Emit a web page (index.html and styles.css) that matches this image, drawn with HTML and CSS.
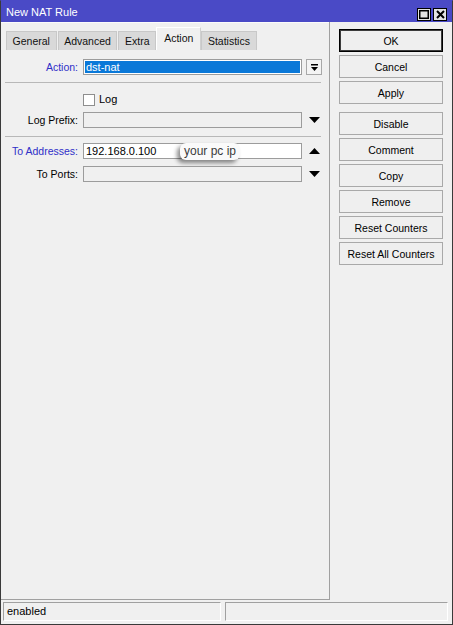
FILE: index.html
```html
<!DOCTYPE html>
<html lang="en">
<head>
  <meta charset="UTF-8" />
  <title>New NAT Rule</title>
  <link rel="stylesheet" href="styles.css">
</head>
<body>
  <div class="window">
    <!-- title bar -->
    <div class="titlebar">
      <span class="title">New NAT Rule</span>
      <div class="title-buttons">
        <span class="tb-btn">
          <svg width="10" height="9" viewBox="0 0 10 9"><rect x="0.75" y="0.75" width="8.5" height="7.5" fill="none" stroke="#000" stroke-width="1.5"/></svg>
        </span>
        <span class="tb-btn">
          <svg width="9" height="9" viewBox="0 0 9 9"><path d="M1 1L8 8M8 1L1 8" stroke="#000" stroke-width="2"/></svg>
        </span>
      </div>
    </div>

    <div class="content">
      <div class="editor">
        <div class="tabs">
          <div class="tab">General</div>
          <div class="tab">Advanced</div>
          <div class="tab">Extra</div>
          <div class="tab active">Action</div>
          <div class="tab">Statistics</div>
        </div>

        <div class="panel">
          <div class="row">
            <span class="field-label blue">Action:</span>
            <div class="input selected"><span>dst-nat</span></div>
            <span class="drop-btn">
              <svg width="9" height="9" viewBox="0 0 9 9"><rect x="1" y="1" width="7" height="1.5" fill="#000"/><path d="M1 4H8L4.5 8Z" fill="#000"/></svg>
            </span>
          </div>

          <div class="sep sep-first"></div>

          <div class="row row-check">
            <span></span>
            <label class="check"><span class="box"></span>Log</label>
          </div>

          <div class="row row-prefix">
            <span class="field-label">Log Prefix:</span>
            <div class="input disabled"></div>
            <span class="arrow">
              <svg width="11" height="6" viewBox="0 0 11 6"><path d="M0 0H11L5.5 6Z" fill="#000"/></svg>
            </span>
          </div>

          <div class="sep sep-second"></div>

          <div class="row row-addr">
            <span class="field-label blue">To Addresses:</span>
            <div class="input">
              <span>192.168.0.100</span>
              <span class="hint">your pc ip</span>
            </div>
            <span class="arrow">
              <svg width="11" height="6" viewBox="0 0 11 6"><path d="M0 6H11L5.5 0Z" fill="#000"/></svg>
            </span>
          </div>

          <div class="row row-ports">
            <span class="field-label">To Ports:</span>
            <div class="input disabled"></div>
            <span class="arrow">
              <svg width="11" height="6" viewBox="0 0 11 6"><path d="M0 0H11L5.5 6Z" fill="#000"/></svg>
            </span>
          </div>
        </div>
      </div>

      <!-- side buttons -->
      <div class="buttons">
        <button class="btn default">OK</button>
        <button class="btn">Cancel</button>
        <button class="btn">Apply</button>
        <button class="btn group-start">Disable</button>
        <button class="btn">Comment</button>
        <button class="btn">Copy</button>
        <button class="btn">Remove</button>
        <button class="btn">Reset Counters</button>
        <button class="btn">Reset All Counters</button>
      </div>
    </div>

    <div class="statusbar">
      <div class="status-field first">enabled</div>
      <div class="status-field"></div>
    </div>
  </div>
</body>
</html>
```

FILE: styles.css
```css
/* base */
body {
  margin: 0;
  font-family: "Liberation Sans", Arial, sans-serif;
  font-size: 10.5px;
  color: #000;
  background: #f0f0f0;
}
* { box-sizing: border-box; }

.window {
  width: 453px;
  height: 625px;
  border: 1px solid #3a3a3a;
  border-top-color: #4a4ac6;
  background: #f0f0f0;
  display: flex;
  flex-direction: column;
}

/* title bar */
.titlebar {
  height: 21px;
  flex: none;
  background: #4a4ac6;
  color: #fff;
  display: flex;
  align-items: center;
  justify-content: space-between;
  padding: 0 5px 0 5px;
  font-size: 11px;
}
.title { margin-top: 1px; }
.title-buttons { display: flex; gap: 2px; margin-top: 5px; }
.tb-btn {
  width: 14px; height: 13px;
  background: #e4e4e4;
  border: 1px solid #000;
  display: flex; align-items: center; justify-content: center;
}

/* main area */
.content {
  flex: 1;
  display: flex;
  min-height: 0;
}
.editor {
  width: 329px;
  display: flex;
  flex-direction: column;
  border-right: 1px solid #a0a0a0;
  border-bottom: 1px solid #a0a0a0;
}

/* tabs */
.tabs {
  height: 28px;
  flex: none;
  display: flex;
  align-items: flex-end;
  padding-left: 5px;
  gap: 1px;
  border-top: 1px solid #fbfbfb;
}
.tab {
  height: 19px;
  line-height: 19px;
  padding: 0 5.6px;
  background: #d9d9d9;
  border: 1px solid #c8c8c8;
  border-bottom: none;
  color: #111;
}
.tab.active {
  height: 23px;
  line-height: 21px;
  padding: 0 7px 2px;
  margin: 0 -1px;
  background: #f0f0f0;
  border-color: #fff #d0d0d0 transparent #fff;
  position: relative;
}

.panel {
  flex: 1;
  padding-top: 9px;
}

/* form rows */
.row {
  display: grid;
  grid-template-columns: 80px 219px 19px;
  column-gap: 2px;
  height: 16px;
  align-items: center;
}
.field-label {
  text-align: right;
  padding-right: 3px;
}
.field-label.blue { color: #2f2fc8; }

.input {
  height: 16px;
  border: 1px solid #9c9c9c;
  background: #fff;
  padding: 0 2px;
  line-height: 14px;
  position: relative;
  font-size: 11px;
}
.input.disabled { background: #f0f0f0; }
.input.selected {
  padding: 1px;
}
.input.selected span {
  display: block;
  height: 12px;
  line-height: 12px;
  background: #0a78d8;
  color: #fff;
  padding-left: 1px;
}

.drop-btn {
  margin-left: 2px;
  width: 16px; height: 16px;
  border: 1px solid #a8a8a8;
  background: #f4f4f4;
  display: flex; align-items: center; justify-content: center;
}
.arrow {
  display: flex;
  justify-content: center;
  padding-left: 2px;
}

.sep {
  height: 1px;
  background: #b8b8b8;
  margin: 0 8px 0 4px;
}
.sep-first { margin-top: 7px; }
.row-check { margin-top: 8px; }
.row-prefix { margin-top: 5px; }
.sep-second { margin-top: 8px; }
.row-addr { margin-top: 6px; }
.row-ports { margin-top: 7px; }

.check {
  display: flex;
  align-items: center;
  gap: 4px;
  font-size: 11px;
}
.check .box {
  width: 12px; height: 12px;
  border: 1px solid #8e8e8e;
  background: #fff;
  margin-top: 1px;
}

/* note bubble on top of the address field */
.hint {
  position: absolute;
  left: 96px;
  top: -1px;
  height: 17px;
  line-height: 17px;
  padding: 0 4px;
  background: #fafafa;
  color: #3a3a3a;
  font-size: 12px;
  border-radius: 6px;
  box-shadow: -3px 3px 4px rgba(0,0,0,0.45);
  text-shadow: 0 0 1px #fff;
}

/* side buttons */
.buttons {
  margin-left: 9px;
  padding-top: 7px;
  width: 104px;
  display: flex;
  flex-direction: column;
  gap: 3px;
}
.btn {
  height: 23px;
  font-family: inherit;
  font-size: 10.5px;
  color: #000;
  background: #efefef;
  border: 1px solid #a9a9a9;
  padding: 0;
}
.btn.default {
  border: 1px solid #000;
  box-shadow: inset 0 0 0 1px #3c3c3c;
}
.btn.group-start { margin-top: 5px; }

/* status bar */
.statusbar {
  height: 24px;
  flex: none;
  display: flex;
  gap: 4px;
  padding: 2px 4px 3px 2px;
}
.status-field {
  flex: 1;
  border: 1px solid #a0a0a0;
  border-right-color: #fff;
  border-bottom-color: #fff;
  padding-left: 3px;
  line-height: 17px;
  font-size: 11px;
}
.status-field.first { flex: none; width: 218px; }
```
